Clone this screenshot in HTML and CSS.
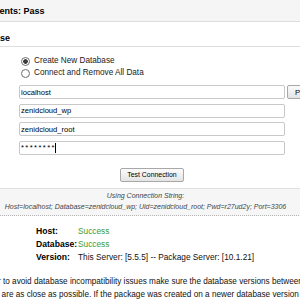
FILE: index.html
```html
<!DOCTYPE html>
<html>
<head>
<meta charset="utf-8">
<link rel="stylesheet" href="styles.css">
</head>
<body>
<div class="page">
  <div class="hdr">Requirements: Pass</div>
  <div class="title">Database</div>
  <div class="form">
    <div class="row radios-row">
      <span class="lbl">Action:</span>
      <div class="radios">
        <label class="opt"><span class="radio on"></span>Create New Database</label>
        <label class="opt"><span class="radio"></span>Connect and Remove All Data</label>
      </div>
    </div>
    <div class="row">
      <span class="lbl">Host:</span>
      <div class="field"><input class="inp" type="text" value="localhost"><button class="btn side">Parse</button></div>
    </div>
    <div class="row">
      <span class="lbl">Database:</span>
      <div class="field"><input class="inp" type="text" value="zenidcloud_wp"></div>
    </div>
    <div class="row">
      <span class="lbl">User:</span>
      <div class="field"><input class="inp" type="text" value="zenidcloud_root"></div>
    </div>
    <div class="row">
      <span class="lbl">Password:</span>
      <div class="field caret"><input class="inp pwd" type="text" value="********"></div>
    </div>
    <div class="row test-row">
      <span class="lbl"></span>
      <div class="test-wrap"><button class="btn test">Test Connection</button></div>
    </div>
  </div>
  <div class="conn">
    <div>Using Connection String:</div>
    <div>Host=localhost; Database=zenidcloud_wp; Uid=zenidcloud_root; Pwd=r27ud2y; Port=3306</div>
  </div>
  <div class="results">
    <span class="rk">Host:</span><span class="ok">Success</span>
    <span class="rk">Database:</span><span class="ok">Success</span>
    <span class="rk">Version:</span><span class="rv">This Server: [5.5.5] -- Package Server: [10.1.21]</span>
  </div>
  <p class="note">In order to avoid database incompatibility issues make sure the database versions between the build and installation<br>servers are as close as possible. If the package was created on a newer database version than where it is being installed then you might run into issues.</p>
</div>
</body>
</html>
```

FILE: styles.css
```css
body {
  margin: 0;
  width: 300px;
  height: 300px;
  overflow: hidden;
  background: #fff;
  font-family: "Liberation Sans", Arial, sans-serif;
  color: #111;
}
.page {
  margin-left: -100px;
  width: 491px;
}
.hdr {
  height: 19px;
  padding: 2px 0 0 58px;
  line-height: 19px;
  font-size: 9px;
  font-weight: bold;
  background: #f5f5f5;
  border-bottom: 1px solid #dcdcdc;
  color: #000;
}
.title {
  padding: 9px 0 0 70px;
  line-height: 15px;
  font-size: 9px;
  font-weight: bold;
  border-bottom: 1px solid #dedede;
  color: #000;
}
.form {
  padding-top: 8px;
}
.row {
  display: flex;
  align-items: center;
  margin-bottom: 4.67px;
}
.radios-row {
  align-items: flex-start;
  margin-bottom: 6px;
}
.lbl {
  width: 119px;
  flex: none;
  box-sizing: border-box;
  padding-left: 8px;
  font-size: 8.2px;
  font-weight: bold;
  line-height: 14px;
}
.opt {
  display: flex;
  align-items: center;
  height: 12px;
  font-size: 8.2px;
  line-height: 12px;
  color: #1a1a1a;
}
.radio {
  width: 9px;
  height: 9px;
  box-sizing: border-box;
  margin: 0 4px 0 2px;
  border: 1px solid #6f6f6f;
  border-radius: 50%;
  background: #fff;
}
.radio.on {
  background: radial-gradient(circle, #3a3a3a 0 2px, #fff 2.6px);
}
.field {
  display: flex;
  align-items: center;
}
.caret {
  position: relative;
}
.caret::after {
  content: "";
  position: absolute;
  left: 36px;
  top: 2px;
  width: 1px;
  height: 10px;
  background: #000;
}
.inp {
  width: 266px;
  height: 14px;
  box-sizing: border-box;
  margin: 0;
  padding: 0 1px;
  border: 1px solid #c8c8c8;
  border-radius: 2px;
  font-family: "Liberation Sans", Arial, sans-serif;
  font-size: 7.6px;
  color: #000;
  background: #fff;
  outline: none;
}
.pwd {
  letter-spacing: 1.4px;
}
.btn {
  height: 14px;
  box-sizing: border-box;
  margin: 0;
  padding: 0 6px;
  border: 1px solid #a8a8a8;
  border-radius: 2px;
  background: linear-gradient(#fbfbfb, #e4e4e4);
  font-family: "Liberation Sans", Arial, sans-serif;
  font-size: 6.9px;
  color: #000;
}
.side {
  margin-left: 2px;
  padding: 0 7px;
  font-size: 7.6px;
}
.test-row {
  margin-top: 8.33px;
  margin-bottom: 0;
}
.test-wrap {
  width: 266px;
  text-align: center;
}
.conn {
  margin-top: 6px;
  padding: 1px 0 3px;
  border-top: 1px solid #e0e0e0;
  border-bottom: 1px dotted #b5b5b5;
  background: #f6f6f6;
  text-align: center;
  font-size: 7px;
  font-style: italic;
  line-height: 11px;
  color: #444;
}
.results {
  display: grid;
  grid-template-columns: 42px auto;
  margin: 9px 0 0 136px;
  line-height: 13px;
}
.rk {
  font-size: 8.6px;
  font-weight: bold;
  color: #000;
}
.ok {
  font-size: 8.3px;
  color: #3d9b35;
}
.rv {
  font-size: 8.3px;
  color: #111;
}
.note {
  margin: 11px 0 0 72.5px;
  font-size: 8.2px;
  line-height: 13px;
  white-space: nowrap;
  color: #111;
}
```
